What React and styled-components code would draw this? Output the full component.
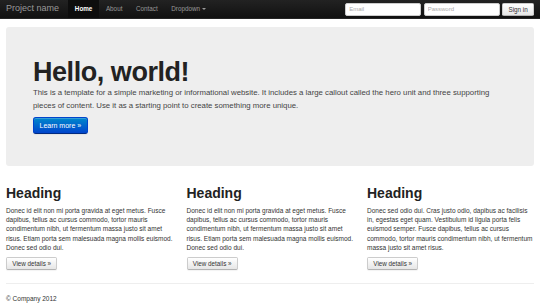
import React from "react";
import styled, { createGlobalStyle } from "styled-components";

const GlobalStyle = createGlobalStyle`
  body {
    margin: 0;
    background: #fff;
    font-family: "Liberation Sans", Arial, sans-serif;
    font-size: 6.5px;
    line-height: 9.2px;
    color: #333;
  }
`;

const Navbar = styled.div`
  height: 19px;
  background: linear-gradient(#222, #111);
  border-bottom: 1px solid #252525;
  box-sizing: border-box;
`;

const Container = styled.div`
  width: 528px;
  margin: 0 auto;
`;

const NavInner = styled(Container)`
  display: flex;
  align-items: stretch;
  height: 100%;
`;

const Brand = styled.a`
  display: flex;
  align-items: center;
  font-size: 9px;
  color: #999;
  padding-right: 9px;
`;

const NavLink = styled.a`
  display: flex;
  align-items: center;
  padding: 0 6.8px;
  font-size: 6.3px;
  color: ${(p) => (p.$active ? "#fff" : "#999")};
  font-weight: ${(p) => (p.$active ? "bold" : "normal")};
  background: ${(p) => (p.$active ? "#0d0d0d" : "transparent")};
`;

const Caret = styled.span`
  display: inline-block;
  margin-left: 2.5px;
  border-top: 2px solid #999;
  border-left: 2px solid transparent;
  border-right: 2px solid transparent;
`;

const SignInForm = styled.form`
  margin: 0 0 0 auto;
  display: flex;
  align-items: center;
  gap: 2.5px;
`;

const Input = styled.input`
  box-sizing: border-box;
  width: 76px;
  height: 13px;
  padding: 0 3px;
  border: 1px solid #ccc;
  border-radius: 2px;
  font-family: inherit;
  font-size: 6px;
  color: #555;
  background: #fff;
  &::placeholder {
    color: #aaa;
  }
`;

const Button = styled.button`
  box-sizing: border-box;
  font-family: inherit;
  font-size: ${(p) => (p.$primary ? "7px" : "6.3px")};
  height: ${(p) => (p.$primary ? "17px" : "13px")};
  padding: ${(p) => (p.$primary ? "0 5.5px" : "0 5.3px")};
  color: ${(p) => (p.$primary ? "#fff" : "#333")};
  background: ${(p) =>
    p.$primary
      ? "linear-gradient(#0088cc, #0044cc)"
      : "linear-gradient(#fff, #e6e6e6)"};
  border: 1px solid ${(p) => (p.$primary ? "#0044cc" : "#ccc")};
  border-bottom-color: ${(p) => (p.$primary ? "#002a80" : "#b3b3b3")};
  border-radius: ${(p) => (p.$primary ? "2.7px" : "1.8px")};
  box-shadow: inset 0 1px 0 rgba(255, 255, 255, 0.2),
    0 1px 1px rgba(0, 0, 0, 0.05);
  cursor: pointer;
`;

const Main = styled(Container)`
  padding-top: 8px;
`;

const Hero = styled.div`
  background: #eee;
  border-radius: 3px;
  padding: 27px;
  margin-bottom: 13.5px;
  h1 {
    margin: 4.5px 0 0;
    font-size: 27px;
    line-height: 27px;
    letter-spacing: -0.45px;
    font-weight: bold;
    color: #222;
  }
  p {
    margin: 0 0 4.5px;
    font-size: 7.8px;
    line-height: 13.5px;
    color: #444;
  }
`;

const Row = styled.div`
  display: grid;
  grid-template-columns: repeat(3, 167px);
  column-gap: 13.5px;
`;

const Column = styled.div`
  h2 {
    margin: 4.5px 0;
    font-size: 14px;
    line-height: 18px;
    font-weight: bold;
    color: #222;
  }
  p {
    margin: 0 0 4.5px;
  }
`;

const Rule = styled.hr`
  margin: 9px 0;
  border: 0;
  border-top: 1px solid #eee;
  border-bottom: 1px solid #fff;
`;

const Footer = styled.footer`
  p {
    margin: 0;
  }
`;

const columns = [
  "Donec id elit non mi porta gravida at eget metus. Fusce dapibus, tellus ac cursus commodo, tortor mauris condimentum nibh, ut fermentum massa justo sit amet risus. Etiam porta sem malesuada magna mollis euismod. Donec sed odio dui.",
  "Donec id elit non mi porta gravida at eget metus. Fusce dapibus, tellus ac cursus commodo, tortor mauris condimentum nibh, ut fermentum massa justo sit amet risus. Etiam porta sem malesuada magna mollis euismod. Donec sed odio dui.",
  "Donec sed odio dui. Cras justo odio, dapibus ac facilisis in, egestas eget quam. Vestibulum id ligula porta felis euismod semper. Fusce dapibus, tellus ac cursus commodo, tortor mauris condimentum nibh, ut fermentum massa justo sit amet risus.",
];

export default function App() {
  return (
    <>
      <GlobalStyle />
      <Navbar>
        <NavInner>
          <Brand>Project name</Brand>
          <NavLink $active>Home</NavLink>
          <NavLink>About</NavLink>
          <NavLink>Contact</NavLink>
          <NavLink>
            Dropdown <Caret />
          </NavLink>
          <SignInForm onSubmit={(e) => e.preventDefault()}>
            <Input type="text" placeholder="Email" />
            <Input type="password" placeholder="Password" />
            <Button type="submit">Sign in</Button>
          </SignInForm>
        </NavInner>
      </Navbar>

      <Main>
        <Hero>
          <h1>Hello, world!</h1>
          <p>
            This is a template for a simple marketing or informational website.
            It includes a large callout called the hero unit and three
            supporting pieces of content. Use it as a starting point to create
            something more unique.
          </p>
          <p>
            <Button $primary>Learn more &raquo;</Button>
          </p>
        </Hero>

        <Row>
          {columns.map((text, i) => (
            <Column key={i}>
              <h2>Heading</h2>
              <p>{text}</p>
              <p>
                <Button>View details &raquo;</Button>
              </p>
            </Column>
          ))}
        </Row>

        <Rule />

        <Footer>
          <p>&copy; Company 2012</p>
        </Footer>
      </Main>
    </>
  );
}
